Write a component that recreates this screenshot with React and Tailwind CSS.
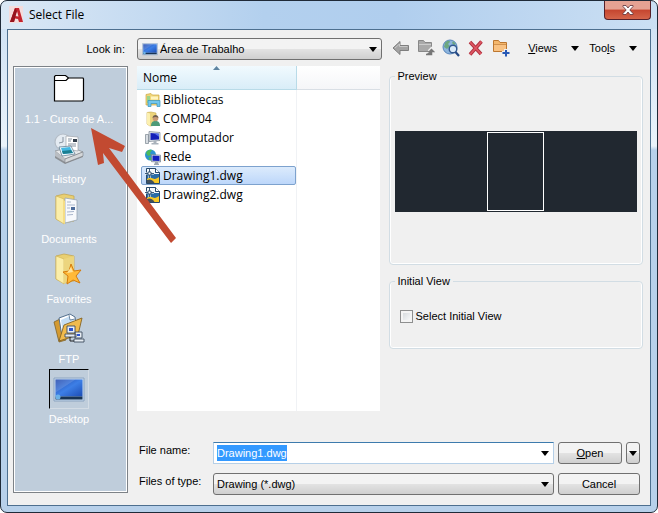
import { useEffect, useRef } from "react";

const uiFont = "font-['Liberation_Sans',Arial,sans-serif] text-[11px] leading-4";
const shellFont = "font-['Open_Sans','Noto_Sans',sans-serif] text-[12px]";

function Caret() {
  return (
    <svg width="8" height="5" viewBox="0 0 8 5" className="shrink-0" aria-hidden="true">
      <path d="M0 0h8L4 5z" fill="#000" />
    </svg>
  );
}

/* ---------- place bar icons ---------- */

function BlankFolder() {
  return (
    <svg width="32" height="32" viewBox="0 0 32 32">
      <path d="M1.500 28V3.500l1-1h10l3 2.500h14.500l.5 1v21l-1 1z" fill="#fff" stroke="#000" strokeWidth="1.200" />
      <path d="M1.500 7.500h11.500l2.500-2.500" fill="none" stroke="#000" strokeWidth="1.200" />
    </svg>
  );
}

function HistoryIcon() {
  return (
    <svg width="32" height="32" viewBox="0 0 32 32">
      <path d="M2 19l16-4 12 5v4l-18 7-10-6z" fill="#8c9095" />
      <path d="M2 18l16-4 12 5-18 7z" fill="#e6e8ea" stroke="#777c82" strokeWidth=".6" />
      <path d="M2 18v5l10 6v-4z" fill="#b9bdc2" />
      <path d="M12 26v4l18-7v-4z" fill="#d4d7da" stroke="#6e7379" strokeWidth=".5" />
      <circle cx="10" cy="9" r="8" fill="#e4ebf2" stroke="#b3bcc6" strokeWidth="1.200" />
      <path d="M10 4v5l-4 1" fill="none" stroke="#8793a0" />
      <path d="M13 3l12 1v14l-12-2z" fill="#fff" stroke="#9da4ab" strokeWidth=".7" />
      <path d="M15 6h4M15 8h3M15 11h8M15 13h8" stroke="#8693a1" />
      <path d="M20 6h4v3h-4z" fill="#333f4c" />
      <path d="M6 14l12-1 4 8-13 2z" fill="#eef8fd" stroke="#56748a" strokeWidth=".7" />
      <path d="M8 15l9-1 3 6-10 1z" fill="#43b8e2" />
      <path d="M9 18l9-1 2 3-10 1z" fill="#1b7e91" />
    </svg>
  );
}

function FolderBase() {
  return (
    <>
      <path d="M3 3l8-2 10 2v25l-10 2-8-4z" fill="#e8cf72" stroke="#c3a447" strokeWidth=".7" />
      <path d="M3 3l8 3v25l-8-5z" fill="#fbeea9" stroke="#cdb052" strokeWidth=".6" />
    </>
  );
}

function DocumentsIcon() {
  return (
    <svg width="32" height="32" viewBox="0 0 32 32">
      <FolderBase />
      <path d="M12 5l12 2v20l-12 3z" fill="#f7f9fc" stroke="#98a6b6" strokeWidth=".8" />
      <path d="M14 9h4M14 12h8M14 15h3M14 19l7-.5M14 22l6-.5" stroke="#a9b6cc" />
      <path d="M18 14h4v3h-4z" fill="#4d6c9b" />
      <path d="M10 7l2 1v23l-2-1z" fill="#f5dd85" />
    </svg>
  );
}

function FavoritesIcon() {
  return (
    <svg width="32" height="32" viewBox="0 0 32 32">
      <FolderBase />
      <path d="M11 6l10-3v22l-10 6z" fill="#ecd57e" />
      <path d="M18 11l3 7 7-1-5 6 4 7-7-3-6 4 1-8-5-4 6-1z" fill="#ffb938" stroke="#d47c0d" />
      <path d="M18 14l2 5-6 1z" fill="#ffe39a" />
    </svg>
  );
}

function FtpIcon() {
  return (
    <svg width="32" height="32" viewBox="0 0 32 32">
      <path d="M1 9l6-3 3 2 3 19-7 2z" fill="#d49a31" stroke="#7d6229" strokeWidth=".8" />
      <path d="M6 5l11-4 5 3 2 14-15 6z" fill="#fff" stroke="#53708e" />
      <path d="M8 7l9-4 4 4 1 10-12 4z" fill="#c5def4" />
      <path d="M16 2l1 5 5-1" fill="#fff" stroke="#53708e" strokeWidth=".8" />
      <path d="M6 28l5-16 18-7-4 17z" fill="#f1bb4d" stroke="#856323" strokeWidth=".9" />
      <path d="M14 13h8v7h-8zM12 21h11v3H12zM22 19h7v6h-7zM21 26h10v3H21z" fill="#e7edf3" stroke="#3d4c5d" strokeWidth=".9" />
      <path d="M16 15h4v3h-4zM24 21h3v2h-3z" fill="#2b55d2" />
      <path d="M17 24v4h4" fill="none" stroke="#222" />
    </svg>
  );
}

function DesktopIcon({ size = 32 }) {
  return (
    <svg width={size} height={size} viewBox="0 0 32 32" className="shrink-0">
      <defs>
        <linearGradient id="screen" x1="0" y1="0" x2="1" y2="1">
          <stop offset="0" stopColor="#2348ac" />
          <stop offset=".5" stopColor="#3d7fe6" />
          <stop offset="1" stopColor="#1c4cb4" />
        </linearGradient>
      </defs>
      <path d="M1 5h30v23H1z" fill="#c6d9ee" stroke="#8ca4c0" />
      <path d="M2.500 6.500h27v17h-27z" fill="url(#screen)" />
      <path d="M2.500 23.500h27v3h-27z" fill="#183454" />
      <path d="M2.500 6.500h20l-20 13z" fill="#fff" opacity=".14" />
      <circle cx="5" cy="24" r="2.500" fill="#6bb2e8" />
    </svg>
  );
}

/* ---------- list icons ---------- */

function LibrariesIcon() {
  return (
    <svg width="16" height="16" viewBox="0 0 16 16">
      <path d="M1 2.500l5-1 1.500 1.500H14V13H1z" fill="#f0d57a" stroke="#caa744" strokeWidth=".7" />
      <path d="M2 4h3v7H2z" fill="#9bd48b" />
      <path d="M6 4.500h7v3H6z" fill="#fff4bf" />
      <path d="M3 8.500h12v6h-3v-3H6v3H3z" fill="#72c7ee" stroke="#3593bd" strokeWidth=".7" />
    </svg>
  );
}

function UserFolderIcon() {
  return (
    <svg width="16" height="16" viewBox="0 0 16 16">
      <path d="M2 1.500L6 1l5 1v12l-6 1-3-2z" fill="#ecd47b" stroke="#c6a84c" strokeWidth=".6" />
      <path d="M2 1.500l3 1V15l-3-2z" fill="#fcf0b0" />
      <path d="M6 15c0-4 2-5 4.500-5s4.500 1 4.500 5z" fill="#4d9a77" />
      <circle cx="10.500" cy="7.500" r="2.800" fill="#c89a74" />
      <path d="M7.500 7c0-4 6-4 6 0-2-1.500-4-1.500-6 0z" fill="#71604d" />
    </svg>
  );
}

function ComputerIcon() {
  return (
    <svg width="16" height="16" viewBox="0 0 16 16">
      <path d="M.5 4.500h3v9h-3z" fill="#d8dde2" stroke="#7a858f" strokeWidth=".7" />
      <path d="M4 1.500l11 1v8l-11 1z" fill="#dce3ea" stroke="#78838f" strokeWidth=".7" />
      <path d="M5.500 3l8.500.8v5.700l-8.500.5z" fill="#1420b8" />
      <path d="M9 3.300l5 .5v3z" fill="#5570ec" />
      <path d="M8.500 11h3v2h2v1.500h-7V13h2z" fill="#a9b2bb" />
    </svg>
  );
}

function NetworkIcon() {
  return (
    <svg width="16" height="16" viewBox="0 0 16 16">
      <circle cx="5.500" cy="6" r="5.500" fill="#2c94cf" />
      <path d="M1 4c1-3 4-4 6-3L5 4l1 2-3 1zM4 8l3 1-1 2.500C4 11 3 10 4 8z" fill="#4dbb5b" />
      <path d="M6.500 5.500l9 .7v6.800l-9-.3z" fill="#d9e2ea" stroke="#6f7c8b" strokeWidth=".7" />
      <path d="M7.500 6.500l7 .6v5l-7-.3z" fill="#1521c0" />
      <path d="M10 13h3v1.500h1V16H9v-1.500h1z" fill="#9ca6b0" />
    </svg>
  );
}

function DwgIcon() {
  return (
    <svg width="16" height="16" viewBox="0 0 16 16">
      <path d="M1.500.5h9l4 4v11h-13z" fill="#2a6ca6" stroke="#27496b" />
      <path d="M2 1h8v3.500h4V6H2z" fill="#f4f8fb" />
      <path d="M10.500.5v4h4" fill="#fff" stroke="#27496b" />
      <path d="M2 11c2-2 4-1.500 6-.5s4 0 6-1.500v6H2z" fill="#f7c824" />
      <path d="M2 12c3-1.500 6 0 7.500 3H2z" fill="#42505c" />
      <path d="M0 5.500h9M4.500 1v9" stroke="#fff" strokeWidth="2" />
      <path d="M0 5.500h3M6 5.500h3M4.500 1v3M4.500 7v3M3 4h3v3H3z" fill="none" stroke="#27496b" strokeWidth=".9" />
    </svg>
  );
}

/* ---------- toolbar icons ---------- */

const BackIcon = () => (
  <svg width="18" height="18" viewBox="0 0 18 18">
    <path d="M1 9l7-6.500v4h8.500v5H8v4z" fill="#a3a3a3" stroke="#7e7e7e" />
    <path d="M3 9l4.500-4v2.500h8" fill="none" stroke="#c7c7c7" />
  </svg>
);
const UpIcon = () => (
  <svg width="18" height="18" viewBox="0 0 18 18">
    <path d="M1.500 12.500v-11h5l1.500 2h6.500v9z" fill="#a9a9a9" stroke="#888" />
    <path d="M2 5.500h12" stroke="#ccc" />
    <path d="M9 15.500h5.500v-4M12 12.500l2.500-2.500 2.500 2.500" fill="none" stroke="#efefef" strokeWidth="3.500" />
    <path d="M9 15.500h5.500v-4M12.500 12.500l2-2 2 2z" fill="#777" stroke="#777" strokeWidth="1.500" />
  </svg>
);
const WebIcon = () => (
  <svg width="18" height="18" viewBox="0 0 18 18">
    <circle cx="8" cy="8" r="7" fill="#8cb4dd" stroke="#5886bb" />
    <path d="M3 4c2-3 5-2.500 5-1L6 5l2 2-3 3-3-2zM11 2l3 3-2 1-2-2z" fill="#6ca780" />
    <circle cx="11" cy="10" r="3.800" fill="#d8e9f8" stroke="#31588f" strokeWidth="1.400" />
    <path d="M13.500 13l3.500 4" stroke="#244985" strokeWidth="2.200" />
  </svg>
);
const DeleteIcon = () => (
  <svg width="18" height="18" viewBox="0 0 18 18">
    <path d="M3 3l11 12M14.500 2.500L3 15.500" stroke="#b0303f" strokeWidth="3.500" />
    <path d="M3 3l11 12M14.500 2.500L3 15.500" stroke="#de5763" strokeWidth="1.800" />
  </svg>
);
const NewFolderIcon = () => (
  <svg width="18" height="18" viewBox="0 0 18 18">
    <path d="M1.500 12.500v-11h5l1.500 2h6.500v9z" fill="#f4b76d" stroke="#bd7730" />
    <path d="M2 12V5.500h12V12z" fill="#f9c283" />
    <path d="M2 5.500h12" stroke="#d2924e" />
    <path d="M14 10v8M10 14h8" stroke="#efefef" strokeWidth="4" />
    <path d="M14 11v6.500M10.500 14H17.500" stroke="#2859b5" strokeWidth="2" />
  </svg>
);

const places = [
  { name: "1.1 - Curso de A...", Icon: BlankFolder },
  { name: "History", Icon: HistoryIcon },
  { name: "Documents", Icon: DocumentsIcon },
  { name: "Favorites", Icon: FavoritesIcon },
  { name: "FTP", Icon: FtpIcon },
  { name: "Desktop", Icon: DesktopIcon, active: true },
];

const files = [
  { name: "Bibliotecas", Icon: LibrariesIcon },
  { name: "COMP04", Icon: UserFolderIcon },
  { name: "Computador", Icon: ComputerIcon },
  { name: "Rede", Icon: NetworkIcon },
  { name: "Drawing1.dwg", Icon: DwgIcon, selected: true },
  { name: "Drawing2.dwg", Icon: DwgIcon },
];

const tools = [
  ["Back", BackIcon],
  ["Up one level", UpIcon],
  ["Search the Web", WebIcon],
  ["Delete", DeleteIcon],
  ["Create New Folder", NewFolderIcon],
];

const raised = "rounded-[3px] border border-[#707070] bg-linear-to-b from-[#f3f3f3] from-50% via-[#e3e3e3] via-50% to-[#cfcfcf]";

function TitleBar() {
  return (
    <header className="flex h-7 items-start justify-between">
      <div className="flex items-center gap-1 pt-1 pl-0.5">
        <svg width="16" height="20" viewBox="0 0 16 20">
          <path d="M0 1h14v17H0z" fill="#f4dcdc" />
          <path d="M1 17L6 3h4l4 14h-4l-1-3-3-.5L5 17z" fill="#c3242d" />
          <path d="M8 6l-2 5 3.500.5z" fill="#f4dcdc" />
          <path d="M6 3L1 17h4l3-11z" fill="#96131d" />
        </svg>
        <h1 className={`${shellFont} leading-5`}>Select File</h1>
      </div>
      <button type="button" aria-label="Close" className="flex h-[19px] w-[47px] items-center justify-center rounded-b-[4px] border border-t-0 border-[#55202a] bg-linear-to-b from-[#e5a293] from-45% via-[#c5452f] via-50% to-[#d4644a]">
        <svg width="12" height="10" viewBox="0 0 12 10">
          <path d="M1 .5h3l2 2.500L8 .5h3v1L7.800 5 11 8.500v1H8L6 7 4 9.500H1v-1L4.200 5 1 1.500z" fill="#fff" stroke="#5c3038" strokeWidth=".8" />
        </svg>
      </button>
    </header>
  );
}

function PlacesBar() {
  return (
    <nav aria-label="Places" className="row-span-2 mt-1.5 mb-0.5 border border-[#7d8287] bg-[#bfcddb] outline-1 -outline-offset-2 outline-white">
      <ul className="flex flex-col pt-0.5 pr-[3px] text-white">
        {places.map(({ name, Icon, active }) => (
          <li key={name}>
            <button type="button" className="flex h-[60px] w-full flex-col items-center">
              <span className={`flex justify-center ${active ? "mb-0.5 size-10 items-center border border-t-black border-r-[#d3dce5] border-b-[#d3dce5] border-l-black" : "h-[42px] items-start pt-1"}`}>
                <Icon />
              </span>
              <span>{name}</span>
            </button>
          </li>
        ))}
      </ul>
    </nav>
  );
}

function FileList() {
  return (
    <div className="mt-1.5 grid grid-cols-[160px_1fr] grid-rows-[24px_1fr] bg-white">
      <div className="flex flex-col items-center border-r border-b border-[#b9dbe8] bg-linear-to-b from-[#f1fafe] to-[#d9edf8]">
        <svg width="7" height="4" viewBox="0 0 7 4" className="shrink-0">
          <path d="M0 4l3.500-4L7 4z" fill="#5f84a0" />
        </svg>
        <span className={`${shellFont} w-full pl-1.5 leading-4`}>Nome</span>
      </div>
      <div className="border-b border-[#d9dfe5] bg-linear-to-b from-white to-[#f5f6f8]" />
      <ul className={`${shellFont} border-r border-[#f0f2f5] pl-1`}>
        {files.map(({ name, Icon, selected }) => (
          <li key={name} className={`flex h-[19px] items-center gap-[2px] rounded-[2px] border pl-[3px] ${selected ? "border-[#7da2ce] bg-linear-to-b from-[#dcebfc] to-[#bdd7fa]" : "border-transparent"}`}>
            <Icon />
            <span>{name}</span>
          </li>
        ))}
      </ul>
      <div />
    </div>
  );
}

function Group({ title, className, children }) {
  return (
    <fieldset className={`rounded-[4px] border border-[#d2dde4] px-[5px] pb-1 shadow-[inset_1px_0_#fff,inset_-1px_0_#fff,inset_0_-1px_#fff] ${className}`}>
      <legend className="px-[3px]">{title}</legend>
      {children}
    </fieldset>
  );
}

export default function App() {
  const nameRef = useRef(null);
  useEffect(() => {
    nameRef.current.focus();
    nameRef.current.select();
  }, []);

  return (
    <div className="bg-white">
      <main className={`${uiFont} relative flex min-h-screen flex-col rounded-[7px] border border-[#1f2a38] px-1.5 pb-1.5 text-black [background:linear-gradient(to_right,#dbe8f5,#b3d0ee_40%,#b0ceee_60%,#cbdff3)_top/100%_28px_no-repeat,linear-gradient(to_bottom,#cbdff3,#eaf3fb_145px,#b7d0ea_149px)]`}>
        <TitleBar />
        <section className="grid flex-1 grid-cols-[115px_243fr_255fr] grid-rows-[22px_1fr_auto] gap-x-[9px] border border-[#4d6f8f] bg-[#f0f0f0] pt-2 pr-[7px] pb-[10px] pl-[5px]">
          <label htmlFor="lookin" className="self-center pr-[3px] text-right">Look in:</label>
          <div className={`${raised} -mr-0.5 flex items-center px-1`}>
            <DesktopIcon size={16} />
            <select id="lookin" className="h-full min-w-0 flex-1 appearance-none pl-0.5 outline-none">
              <option>Área de Trabalho</option>
            </select>
            <Caret />
          </div>
          <div className="flex items-center justify-between pr-1.5 pb-0.5 pl-[3px]">
            <div className="flex gap-[7px]">
              {tools.map(([label, Icon]) => (
                <button key={label} type="button" aria-label={label}><Icon /></button>
              ))}
            </div>
            <div className="flex gap-2.5">
              <button type="button" className="flex items-center gap-3.5"><span><u>V</u>iews</span><Caret /></button>
              <button type="button" className="flex items-center gap-3.5"><span>Too<u>l</u>s</span><Caret /></button>
            </div>
          </div>

          <PlacesBar />
          <FileList />
          <div className="flex flex-col gap-2 pt-2">
            <Group title="Preview" className="h-[197px]">
              <div className="mt-[47px] flex h-[81px] justify-center bg-[#212830] py-px">
                <div className="w-[57px] border border-white" />
              </div>
            </Group>
            <Group title="Initial View" className="h-[76px]">
              <label className="mt-[19px] ml-[5px] flex items-center gap-[3px]">
                <input type="checkbox" className="size-[13px] appearance-none border border-[#8e8f8f] bg-linear-to-br from-[#cfd4d8] to-white shadow-[inset_0_0_0_2px_#f4f4f4]" />
                Select Initial View
              </label>
            </Group>
          </div>

          <form className="col-span-2 grid grid-cols-[70px_1fr_64px_14px] gap-x-1 gap-y-[9px] pt-[31px] pr-[3px] pl-0.5" onSubmit={(e) => e.preventDefault()}>
            <label htmlFor="filename">File name:</label>
            <div className="flex h-[22px] items-center border border-[#b5cfe7] border-t-[#3d7bad] bg-white pr-1">
              <input id="filename" ref={nameRef} defaultValue="Drawing1.dwg" className="min-w-0 flex-1 pl-[3px] caret-transparent outline-none selection:bg-[#3399ff] selection:text-white" />
              <Caret />
            </div>
            <button type="submit" className={`${raised} h-[22px]`}><u>O</u>pen</button>
            <button type="button" aria-label="Open options" className={`${raised} flex h-[22px] items-center justify-center`}><Caret /></button>
            <label htmlFor="filetype">Files of type:</label>
            <div className={`${raised} flex h-[22px] items-center pr-1`}>
              <select id="filetype" className="h-full min-w-0 flex-1 appearance-none pl-[3px] outline-none">
                <option>Drawing (*.dwg)</option>
              </select>
              <Caret />
            </div>
            <button type="button" className={`${raised} col-span-2 h-[22px]`}>Cancel</button>
          </form>
        </section>

        <svg width="90" height="120" viewBox="0 0 90 120" className="pointer-events-none absolute top-[126px] left-[89px]" aria-hidden="true">
          <path d="M1 1l34 18-3 6-13-4 67 90-5 5L13 26l1 10-6 2z" fill="#c24a31" />
        </svg>
      </main>
    </div>
  );
}
